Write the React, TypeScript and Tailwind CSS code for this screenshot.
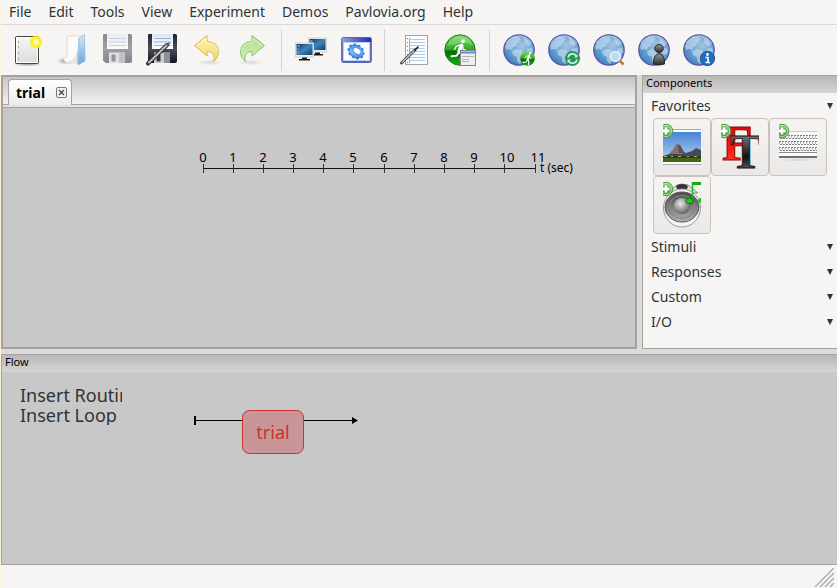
import type { ReactNode } from "react";

const menus = ["File", "Edit", "Tools", "View", "Experiment", "Demos", "Pavlovia.org", "Help"];
const ticks = [0, 30, 60, 90, 120, 150, 181, 211, 241, 271, 301, 332];

function SharedGradients() {
  return (
    <svg width="0" height="0" className="absolute" aria-hidden="true">
      <defs>
        <linearGradient id="paper" x1="0" y1="0" x2="0" y2="1">
          <stop offset="0" stopColor="#f6f6f6" />
          <stop offset="1" stopColor="#dcdcdc" />
        </linearGradient>
        <radialGradient id="glow">
          <stop offset="0" stopColor="#fffef0" />
          <stop offset=".3" stopColor="#fff9a0" />
          <stop offset=".55" stopColor="#fdf01c" />
          <stop offset=".8" stopColor="#fdf01c" stopOpacity=".8" />
          <stop offset="1" stopColor="#fdf01c" stopOpacity="0" />
        </radialGradient>
        <radialGradient id="shade">
          <stop offset="0" stopColor="#000" stopOpacity=".4" />
          <stop offset="1" stopColor="#000" stopOpacity="0" />
        </radialGradient>
        <linearGradient id="folder" x1="0" y1="0" x2="0" y2="1">
          <stop offset="0" stopColor="#d6e8f6" />
          <stop offset="1" stopColor="#6aa5d8" />
        </linearGradient>
        <linearGradient id="disk" x1="0" y1="0" x2="0" y2="1">
          <stop offset="0" stopColor="#20222c" />
          <stop offset=".5" stopColor="#4a4d5e" />
          <stop offset="1" stopColor="#14151c" />
        </linearGradient>
        <linearGradient id="label" x1="0" y1="0" x2="0" y2="1">
          <stop offset="0" stopColor="#dbe6f6" />
          <stop offset="1" stopColor="#fff" />
        </linearGradient>
        <linearGradient id="undo" x1="0" y1="0" x2="0" y2="1">
          <stop offset="0" stopColor="#fbf0b8" />
          <stop offset="1" stopColor="#f2dc66" />
        </linearGradient>
        <linearGradient id="redo" x1="0" y1="0" x2="0" y2="1">
          <stop offset="0" stopColor="#a9dd84" />
          <stop offset="1" stopColor="#d5f2bd" />
        </linearGradient>
        <linearGradient id="screen" x1="0" y1="0" x2="1" y2="1">
          <stop offset="0" stopColor="#0c3563" />
          <stop offset=".5" stopColor="#3f86bd" />
          <stop offset="1" stopColor="#0e3a69" />
        </linearGradient>
        <linearGradient id="titlebar" x1="0" y1="0" x2="1" y2="0">
          <stop offset="0" stopColor="#8da0e0" />
          <stop offset="1" stopColor="#1d2fae" />
        </linearGradient>
        <linearGradient id="gear" x1="0" y1="0" x2="1" y2="1">
          <stop offset="0" stopColor="#2a86e4" />
          <stop offset=".5" stopColor="#7fc0fb" />
          <stop offset="1" stopColor="#2475d2" />
        </linearGradient>
        <linearGradient id="greenBall" x1="0" y1="0" x2="0" y2="1">
          <stop offset="0" stopColor="#7ede64" />
          <stop offset=".48" stopColor="#2fa822" />
          <stop offset=".54" stopColor="#076a04" />
          <stop offset="1" stopColor="#15b010" />
        </linearGradient>
        <radialGradient id="ocean" cx=".6" cy=".35" r=".7">
          <stop offset="0" stopColor="#a3c5e2" />
          <stop offset=".55" stopColor="#6da3d1" />
          <stop offset="1" stopColor="#3d7fba" />
        </radialGradient>
        <linearGradient id="pawn" x1="0" y1="0" x2="0" y2="1">
          <stop offset="0" stopColor="#999" />
          <stop offset="1" stopColor="#2b2b2b" />
        </linearGradient>
        <linearGradient id="sky" x1="0" y1="0" x2="0" y2="1">
          <stop offset="0" stopColor="#4583d6" />
          <stop offset="1" stopColor="#b9d5f2" />
        </linearGradient>
        <linearGradient id="plus" x1="0" y1="0" x2="0" y2="1">
          <stop offset="0" stopColor="#8fcf80" />
          <stop offset="1" stopColor="#3f9a35" />
        </linearGradient>
        <linearGradient id="redType" x1="0" y1="0" x2="0" y2="1">
          <stop offset="0" stopColor="#d80000" />
          <stop offset=".5" stopColor="#ff1010" />
          <stop offset="1" stopColor="#ff4a20" />
        </linearGradient>
        <linearGradient id="blackType" x1="0" y1="0" x2="0" y2="1">
          <stop offset=".2" stopColor="#777" />
          <stop offset=".6" stopColor="#111" />
          <stop offset="1" stopColor="#8a8a8a" />
        </linearGradient>
        <linearGradient id="cone" x1="0" y1="0" x2="0" y2="1">
          <stop offset="0" stopColor="#4a4a4a" />
          <stop offset="1" stopColor="#b0b0b0" />
        </linearGradient>
        <radialGradient id="dome" cx=".4" cy=".35" r=".7">
          <stop offset="0" stopColor="#e8e8e8" />
          <stop offset="1" stopColor="#5a5a5a" />
        </radialGradient>
      </defs>
    </svg>
  );
}

function Icon({ children }: { children: ReactNode }) {
  return (
    <svg width="32" height="32" viewBox="0 0 32 32" className="shrink-0 overflow-visible" aria-hidden="true">
      {children}
    </svg>
  );
}

function Runner() {
  return (
    <g stroke="#fff" fill="none" strokeLinecap="round" strokeLinejoin="round">
      <ellipse cx="19" cy="7.300" rx="1.800" ry="2" fill="#fff" stroke="none" />
      <path d="M17.500 11.500L15 17.500" strokeWidth="3.600" />
      <path d="M16.500 10.800l-4.500 1.700-1.200 2.800M18.500 11.500l.8 4 2 .5" strokeWidth="1.300" />
      <path d="M15 18.500l-2.500 3.200-5 .6M16 18l1.500 4 -1 4" strokeWidth="1.900" />
    </g>
  );
}

function NewIcon() {
  return (
    <Icon>
      <ellipse cx="15.500" cy="30" rx="15" ry="2.500" fill="url(#shade)" />
      <rect x="3.500" y="2.500" width="23" height="27" rx="1" fill="url(#paper)" stroke="#444" />
      <rect x="4.500" y="3.500" width="21" height="25" fill="none" stroke="#fff" />
      <path d="M6.500 7v2M6.500 12v2M6.500 18v2M6.500 24v2" stroke="#aaa" />
      <circle cx="24" cy="8" r="7" fill="url(#glow)" />
    </Icon>
  );
}

function OpenIcon() {
  return (
    <Icon>
      <ellipse cx="9" cy="27" rx="9" ry="3.500" fill="url(#shade)" />
      <path d="M10 3q0-1 1-1h13v24l-5 3H9l-3-5 4-1z" fill="#fcfcfc" stroke="#d6d6d6" strokeWidth=".8" />
      <path d="M19 19l5-2v9l-8 3-8-1q5-1 8-3 2-2 3-6z" fill="#e4e6e8" />
      <path d="M22 4l5.500-3.600 .5 26.600-7 4z" fill="url(#folder)" stroke="#8dbbe2" strokeWidth=".8" />
      <path d="M22 5l-2 25" stroke="#a3c9e8" />
    </Icon>
  );
}

function FloppyIcon({ faded = false, pen = false }: { faded?: boolean; pen?: boolean }) {
  return (
    <Icon>
      <g opacity={faded ? 0.5 : 1}>
        <path d="M2 0h26.500q1.500 0 1.500 1.500V27q0 2-2 2H4L1 26.500V1q0-1 1-1z" fill="url(#disk)" />
        <rect x="5" y="0" width="21" height="15" fill="url(#label)" />
        <path d="M7 4.500h17M7 8h17M7 11.500h17" stroke="#9fb0c9" />
        <path d="M7 18.500h16V29H7z" fill="#c9cbd0" />
        <path d="M17 18.500h6V29h-6z" fill="#8e9097" />
        <rect x="9.500" y="20.500" width="4" height="7" rx="1" fill="#343746" />
      </g>
      {pen && (
        <g strokeLinecap="round">
          <path d="M1 29.500L20 11" stroke="#2b2b2b" strokeWidth="4" />
          <path d="M2 28.500L20 11" stroke="#bcbcbc" strokeWidth="2.200" />
          <path d="M20 11l2.500-2" stroke="#555" strokeWidth="1.600" />
        </g>
      )}
    </Icon>
  );
}

function ArrowIcon({ redo = false }: { redo?: boolean }) {
  return (
    <Icon>
      <ellipse cx={redo ? 14 : 18} cy="28.500" rx="13" ry="3" fill="url(#shade)" opacity=".3" />
      <g transform={redo ? "translate(30 -1) scale(-1 1)" : "translate(0 -1)"}>
        <path
          d="M2.500 12.500L15 2.500v6q11.500.5 11.500 11 0 5.500-5 9 1-3 .5-5.500-1-4.500-7-4.500V23z"
          fill={redo ? "url(#redo)" : "url(#undo)"}
          stroke={redo ? "#83c765" : "#dcb64c"}
          strokeLinejoin="round"
        />
        <path d="M5 12.500l9-7.300v4.300q10 .5 11.400 7.500" fill="none" stroke="#fff" strokeOpacity=".6" />
      </g>
    </Icon>
  );
}

function Monitor() {
  return (
    <g>
      <rect x=".5" y=".5" width="18" height="14" fill="#eeeee9" stroke="#d3d3cd" />
      <rect x="1.500" y="1.500" width="16" height="11" fill="url(#screen)" />
      <path d="M2.500 3.500h2M2.500 6.500h1M2.500 9.500h1" stroke="#e4eef8" />
      <path d="M7 15h5v1.500h3V18H4v-1.500h3z" fill="#16181b" />
    </g>
  );
}

function MonitorsIcon() {
  return (
    <Icon>
      <g transform="translate(13 3.500)"><Monitor /></g>
      <g transform="translate(0 8.500)"><Monitor /></g>
    </Icon>
  );
}

function SettingsIcon() {
  return (
    <Icon>
      <rect x="2" y="4" width="29" height="24" rx="1.500" fill="#fbfcff" stroke="#5664b4" strokeWidth="1.800" />
      <rect x="2" y="4" width="29" height="4" fill="url(#titlebar)" />
      <rect x="3.500" y="8.500" width="26" height="18" fill="none" stroke="#c4cdec" />
      <g transform="rotate(35 16 17.500)">
        <ellipse cx="16" cy="17.500" rx="8" ry="6.300" fill="none" stroke="#2e83dc" strokeWidth="2" strokeDasharray="2.600 1.900" />
        <path
          fillRule="evenodd"
          fill="url(#gear)"
          stroke="#2471c8"
          strokeWidth=".7"
          d="M8.500 17.500a7.500 6 0 1 0 15 0a7.500 6 0 1 0-15 0zM12 16.500a4.500 3 0 1 0 9 0a4.500 3 0 1 0-9 0z"
        />
      </g>
    </Icon>
  );
}

function NotesIcon() {
  return (
    <Icon>
      <rect x="7.500" y="1.500" width="22" height="29" fill="#fdfdfd" stroke="#a3a3a3" />
      <path d="M12 5.500h15M12 8.500h15M12 11.500h15M12 14.500h15M12 17.500h15M12 20.500h15M12 23.500h15M12 26.500h15" stroke="#a9cdea" />
      <path d="M11.500 4v25" stroke="#f08c8c" />
      <path d="M9.500 4v25" stroke="#777" strokeDasharray="1 3" />
      <g strokeLinecap="round">
        <path d="M3.500 29L17 16" stroke="#333" strokeWidth="2.800" />
        <path d="M4 28.500L17 16" stroke="#c8c8c8" strokeWidth="1.400" />
        <path d="M17 16l3-3" stroke="#111" strokeWidth="1.600" />
      </g>
    </Icon>
  );
}

function RunIcon() {
  return (
    <Icon>
      <circle cx="16" cy="16" r="15.200" fill="url(#greenBall)" stroke="#15801b" />
      <path d="M3 12Q9 1 19 2.500q8 1.500 10 9.500-8-5-13-3T3 12z" fill="#fff" opacity=".2" />
      <Runner />
      <rect x="16.500" y="16.500" width="15" height="15" fill="#eee" stroke="#858585" />
      <path d="M17 18.500h14" stroke="#5a8fc9" strokeWidth="2" />
      <path d="M18 22.500h12M18 25.500h7M18 27.500h7" stroke="#b5b5b5" />
    </Icon>
  );
}

function GlobeIcon({ children }: { children: ReactNode }) {
  return (
    <Icon>
      <circle cx="16" cy="16" r="15.200" fill="url(#ocean)" stroke="#5a55ad" strokeWidth="1.300" />
      <path
        d="M7 5l4-2.500 5 .5 2 2-2 1 1 2-3 1-1 3-3 1-1 3-3-1-3 1-1-4 2-4zM20 3l5 3 3 4-2 2-3-1-2-3 1-2zM9 17l5-2 5 1 1 3 3 1-1 4-3 2-2 4-3-3v-4l-4-2zM24 15l5-1 1 4-3 3-3-2z"
        fill="#c1dcf0"
        opacity=".65"
      />
      <path d="M3 9q5-7 13-7t13 7" fill="none" stroke="#d5e7f4" opacity=".6" />
      {children}
    </Icon>
  );
}

function RunBadge() {
  return (
    <g>
      <circle cx="24.500" cy="24.500" r="7.300" fill="url(#greenBall)" />
      <g transform="translate(15.500 15) scale(.6)"><Runner /></g>
    </g>
  );
}

function SyncBadge() {
  return (
    <g>
      <circle cx="24.500" cy="24.500" r="7.500" fill="#26935b" />
      <path d="M20 23.500q1-4 5-3.700 2 .2 3.300 2M29 25.500q-1 4-5 3.700-2-.2-3.300-2" fill="none" stroke="#cff3dc" strokeWidth="1.700" />
      <path d="M29.500 20v3.500H26zM19.500 29v-3.500H23z" fill="#cff3dc" />
    </g>
  );
}

function SearchBadge() {
  return (
    <g>
      <path d="M26.500 26.500l4 4" stroke="#b77a38" strokeWidth="2.600" />
      <circle cx="22.500" cy="22.500" r="5" fill="#bcd9f7" stroke="#e9f2fb" strokeWidth="1.500" />
    </g>
  );
}

function UserBadge() {
  return (
    <g fill="url(#pawn)" stroke="#292929">
      <path d="M15.500 30q-.5-9 5.500-10.500 6 1.500 5.500 10.500-5.500 2-11 0z" />
      <ellipse cx="21" cy="14.500" rx="4.300" ry="4" />
    </g>
  );
}

function InfoBadge() {
  return (
    <g>
      <circle cx="24.500" cy="24.500" r="7.200" fill="#1d6fc2" stroke="#44566b" />
      <circle cx="24.500" cy="20.500" r="1.400" fill="#fff" />
      <path d="M22.500 23.500h2.500v5M22.500 28.500h4.500" stroke="#fff" strokeWidth="1.600" fill="none" />
    </g>
  );
}

const toolGroups: { name: string; icon: ReactNode; wide?: boolean }[][] = [
  [
    { name: "New", icon: <NewIcon /> },
    { name: "Open", icon: <OpenIcon /> },
    { name: "Save", icon: <FloppyIcon faded /> },
    { name: "Save as", icon: <FloppyIcon pen /> },
    { name: "Undo", icon: <ArrowIcon /> },
    { name: "Redo", icon: <ArrowIcon redo /> },
  ],
  [
    { name: "Monitor center", icon: <MonitorsIcon /> },
    { name: "Experiment settings", icon: <SettingsIcon /> },
  ],
  [
    { name: "Compile script", icon: <NotesIcon /> },
    { name: "Run", icon: <RunIcon />, wide: true },
  ],
  [
    { name: "Run online", icon: <GlobeIcon><RunBadge /></GlobeIcon> },
    { name: "Sync online", icon: <GlobeIcon><SyncBadge /></GlobeIcon> },
    { name: "Search online", icon: <GlobeIcon><SearchBadge /></GlobeIcon> },
    { name: "User", icon: <GlobeIcon><UserBadge /></GlobeIcon> },
    { name: "Project info", icon: <GlobeIcon><InfoBadge /></GlobeIcon> },
  ],
];

function ComponentIcon({ children }: { children: ReactNode }) {
  return (
    <svg width="38" height="48" viewBox="0 0 38 48" className="overflow-hidden" aria-hidden="true">
      {children}
      <circle cx="3" cy="8" r="6.800" fill="url(#plus)" stroke="#52a048" />
      <circle cx="3" cy="8" r="5.600" fill="none" stroke="#c4e8bb" strokeWidth=".8" />
      <path d="M3 4.500v7M-.5 8h7" stroke="#fff" strokeWidth="2.400" />
    </svg>
  );
}

function ImageIcon() {
  return (
    <ComponentIcon>
      <path d="M0 6h38v36H0z" fill="#fff" />
      <path d="M0 6.500h38M0 41.500h38" stroke="#aaa" />
      <path d="M0 9h38v30H0z" fill="url(#sky)" />
      <path d="M0 33l6-2 4-4 4-6 3 1 4 7 2 1 6-2 4-3 5 2v8H0z" fill="#474a50" />
      <path d="M7 31l7-10 2 1 3 6 1 3z" fill="#86706c" />
      <path d="M15 22l2 1 4 7h-5z" fill="#5b4f55" />
      <path d="M0 33h38v3H0z" fill="#2b3a26" />
      <path d="M1 33.500h3m4 0h2m5 0h3m6 0h2m5 0h3" stroke="#a8a49c" />
      <path d="M0 35h38v4H0z" fill="#3f6a12" />
    </ComponentIcon>
  );
}

function TypeIcon() {
  return (
    <ComponentIcon>
      <g fontFamily="Liberation Serif, serif" fontWeight="700">
        <text x="1" y="37" fontSize="50" fill="url(#redType)" stroke="#7c0c08">F</text>
        <text x="9" y="45" fontSize="48" fill="url(#blackType)" stroke="#111" strokeWidth=".8">T</text>
      </g>
    </ComponentIcon>
  );
}

function KeyboardIcon() {
  return (
    <ComponentIcon>
      <rect x="0" y="8" width="38" height="25" fill="#fafafa" />
      <path d="M0 8.500h38" stroke="#ccc" />
      <path d="M0 12.500h38M0 18.500h38M0 24.500h38" stroke="#7d7d7d" strokeDasharray="2 1" />
      <path d="M1 15.500h37M1 21.500h37M1 27.500h37" stroke="#7d7d7d" strokeDasharray="2 1" />
      <path d="M0 14h38M0 20h38M0 26h38" stroke="#b5b5b5" strokeWidth="2" strokeDasharray="1 2" />
      <path d="M0 29.500h38" stroke="#8a8a8a" />
      <path d="M0 34h38" stroke="#39484e" strokeWidth="1.600" />
      <ellipse cx="19" cy="37" rx="17" ry="1.500" fill="url(#shade)" opacity=".3" />
    </ComponentIcon>
  );
}

function SoundIcon() {
  return (
    <ComponentIcon>
      <path d="M5 12l9-8 5-1 6 1 10 8z" fill="#e2e2e2" stroke="#888" />
      <path d="M13 5q6-4 12 0l-1 3H14z" fill="#333" />
      <ellipse cx="19" cy="27" rx="18.500" ry="19" fill="#f4f4f4" stroke="#999" />
      <ellipse cx="19" cy="26" rx="17" ry="15" fill="url(#cone)" stroke="#555" />
      <ellipse cx="19" cy="26" rx="13" ry="11.500" fill="none" stroke="#858585" />
      <circle cx="19" cy="25" r="8" fill="url(#dome)" />
      <path d="M29.500 20V2H38" fill="none" stroke="#19b419" strokeWidth="1.500" />
      <path d="M29 1h9v3h-9z" fill="#18a818" />
      <ellipse cx="26.500" cy="20" rx="3.800" ry="2.800" fill="#22c322" stroke="#0c750c" />
      <ellipse cx="38" cy="19.500" rx="3" ry="2.500" fill="#22c322" />
    </ComponentIcon>
  );
}

const favorites = [
  { name: "Image", icon: <ImageIcon /> },
  { name: "Text", icon: <TypeIcon /> },
  { name: "Keyboard", icon: <KeyboardIcon /> },
  { name: "Sound", icon: <SoundIcon /> },
];

function SectionHeader({ title, open = false }: { title: string; open?: boolean }) {
  return (
    <button type="button" aria-expanded={open} className="flex h-[25px] w-full items-center justify-between pl-2 pr-1 text-left text-sm">
      {title}
      <svg width="6" height="6" viewBox="0 0 6 6" aria-hidden="true">
        <path d="M0 0h6L3 6z" fill="#2e3436" />
      </svg>
    </button>
  );
}

function PanelTitle({ children }: { children: ReactNode }) {
  return (
    <h2 className="h-[18px] border-t border-[#a3a29f] bg-linear-to-b from-[#b8b7b5] to-[#d6d5d3] pl-[3px] text-[11px] leading-[14px] text-black">
      {children}
    </h2>
  );
}

function Timeline() {
  return (
    <svg width="400" height="32" viewBox="0 0 400 32" className="ml-[194px] mt-[40px] shrink-0" role="img" aria-label="Routine timeline in seconds" fontFamily="Noto Sans, sans-serif">
      <path d="M6 20.500h333" stroke="#111" />
      {ticks.map((x, i) => (
        <g key={i}>
          <path d={`M${x + 6.5} 16v9`} stroke="#333" />
          <text x={x + (i > 9 ? 9 : 6)} y="14" textAnchor="middle" fontSize="13">{i}</text>
        </g>
      ))}
      <text x="343" y="24" fontSize="12">t (sec)</text>
    </svg>
  );
}

export default function App() {
  return (
    <div className="flex min-h-screen flex-col border-l border-[#fdf3dc] bg-[#f6f5f4] font-['Noto_Sans',sans-serif] text-sm text-[#2e3436]">
      <SharedGradients />
      <nav className="flex h-[25px] items-center gap-px border-b border-[#dad8d6]">
        {menus.map((m) => (
          <button key={m} type="button" className="px-2">{m}</button>
        ))}
      </nav>
      <div role="toolbar" className="flex h-[50px] items-center gap-[13px] pl-1">
        {toolGroups.map((group, g) => (
          <div key={g} className={g === 0 ? "flex" : "relative flex before:absolute before:-left-[7px] before:top-1 before:h-[42px] before:w-px before:bg-[#d5d3d1]"}>
            {group.map((tool) => (
              <button
                key={tool.name}
                type="button"
                aria-label={tool.name}
                className={`flex h-[50px] items-center justify-center ${tool.wide ? "w-[47px]" : "w-[45px]"}`}
              >
                {tool.icon}
              </button>
            ))}
          </div>
        ))}
      </div>

      <div className="flex flex-1 flex-col gap-[5px] bg-[#dcdbda]">
        <div className="flex gap-[5px]">
          <main className="flex min-w-0 flex-1 flex-col border-2 border-[#a3a29f] bg-[#c8c8c8]">
            <div role="tablist" className="flex h-[28px] items-end border-b border-[#a3a29f] bg-linear-to-b from-[#c6c5c3] to-[#f2f2f1] pl-[5px]">
              <div className="-mb-px flex h-[26px] items-center gap-[10px] rounded-t-[4px] border border-b-0 border-[#a3a29f] bg-linear-to-b from-white to-[#ececeb] pl-[7px] pr-[3px]">
                <button type="button" role="tab" aria-selected="true" className="font-bold text-black">trial</button>
                <button type="button" aria-label="Close trial">
                  <svg width="13" height="13" viewBox="0 0 13 13" aria-hidden="true">
                    <rect x="1.500" y="1.500" width="10" height="10" rx="1.500" fill="#f4f4f4" stroke="#777" />
                    <path d="M4 4l5 5M9 4l-5 5" stroke="#555" strokeWidth="1.600" />
                  </svg>
                </button>
              </div>
            </div>
            <div className="h-[3px] border-b border-[#a3a29f] bg-[#e4e3e2]" />
            <Timeline />
          </main>
          <aside className="w-[195px] shrink-0 border-b border-l border-[#a3a29f] bg-[#f6f5f4] pb-[14px]">
            <PanelTitle>Components</PanelTitle>
            <SectionHeader title="Favorites" open />
            <div className="flex flex-wrap pl-[10px]">
              {favorites.map((f) => (
                <button key={f.name} type="button" aria-label={f.name} className="flex size-[58px] items-center justify-center rounded-[4px] border border-[#c9c3bd] bg-linear-to-b from-[#f5f4f2] to-[#ebe9e7]">
                  {f.icon}
                </button>
              ))}
            </div>
            {["Stimuli", "Responses", "Custom", "I/O"].map((s) => (
              <SectionHeader key={s} title={s} />
            ))}
          </aside>
        </div>

        <section className="flex flex-1 flex-col border-b border-l border-[#a3a29f] bg-[#c8c8c8]">
          <PanelTitle>Flow</PanelTitle>
          <div className="flex items-start pl-[18px] pt-[13px]">
            <div className="flex w-[102px] flex-col items-start overflow-hidden text-[18px] leading-5">
              <button type="button" className="whitespace-nowrap">Insert Routine</button>
              <button type="button" className="whitespace-nowrap">Insert Loop</button>
            </div>
            <svg width="170" height="50" viewBox="0 0 170 50" className="ml-[70px] mt-[22px]" role="img" aria-label="Experiment flow">
              <path d="M3 13.500h160" stroke="#000" />
              <path d="M3 9v9" stroke="#000" strokeWidth="2" />
              <path d="M160 10l6 3.500-6 3.500z" />
              <rect x="50.500" y="3.500" width="61" height="43" rx="7" fill="#c89696" stroke="#cd2f2f" />
              <text x="81" y="32" textAnchor="middle" fontFamily="Noto Sans, sans-serif" fontSize="18" fill="#cd2f2f">trial</text>
            </svg>
          </div>
        </section>
      </div>
      <footer className="flex h-[23px] items-end justify-end pb-px pr-[3px]">
        <svg width="19" height="19" viewBox="0 0 19 19" aria-hidden="true">
          <path d="M0 19L19 0M5 19L19 5M10 19l9-9M15 19l4-4" stroke="#b0aeab" strokeWidth="1.500" />
        </svg>
      </footer>
    </div>
  );
}
